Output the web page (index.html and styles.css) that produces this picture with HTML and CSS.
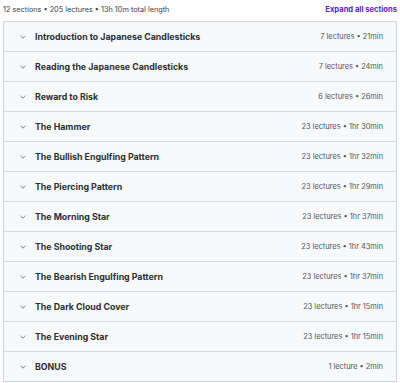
FILE: index.html
```html
<!DOCTYPE html>
<html>
<head>
	<meta charset="utf-8">
	<title>Course content</title>
	<link rel="stylesheet" href="styles.css">
</head>
<body>
	<div class="summary">
		<span class="totals">12 sections • 205 lectures • 13h 10m total length</span>
		<span class="expand">Expand all sections</span>
	</div>
	<ul class="sections">
		<li><svg class="chev" viewBox="0 0 6 4"><path d="M0.5 0.8 L3 3.2 L5.5 0.8"/></svg><span class="title">Introduction to Japanese Candlesticks</span><span class="meta">7 lectures • 21min</span></li>
		<li><svg class="chev" viewBox="0 0 6 4"><path d="M0.5 0.8 L3 3.2 L5.5 0.8"/></svg><span class="title">Reading the Japanese Candlesticks</span><span class="meta">7 lectures • 24min</span></li>
		<li><svg class="chev" viewBox="0 0 6 4"><path d="M0.5 0.8 L3 3.2 L5.5 0.8"/></svg><span class="title">Reward to Risk</span><span class="meta">6 lectures • 26min</span></li>
		<li><svg class="chev" viewBox="0 0 6 4"><path d="M0.5 0.8 L3 3.2 L5.5 0.8"/></svg><span class="title">The Hammer</span><span class="meta">23 lectures • 1hr 30min</span></li>
		<li><svg class="chev" viewBox="0 0 6 4"><path d="M0.5 0.8 L3 3.2 L5.5 0.8"/></svg><span class="title">The Bullish Engulfing Pattern</span><span class="meta">23 lectures • 1hr 32min</span></li>
		<li><svg class="chev" viewBox="0 0 6 4"><path d="M0.5 0.8 L3 3.2 L5.5 0.8"/></svg><span class="title">The Piercing Pattern</span><span class="meta">23 lectures • 1hr 29min</span></li>
		<li><svg class="chev" viewBox="0 0 6 4"><path d="M0.5 0.8 L3 3.2 L5.5 0.8"/></svg><span class="title">The Morning Star</span><span class="meta">23 lectures • 1hr 37min</span></li>
		<li><svg class="chev" viewBox="0 0 6 4"><path d="M0.5 0.8 L3 3.2 L5.5 0.8"/></svg><span class="title">The Shooting Star</span><span class="meta">23 lectures • 1hr 43min</span></li>
		<li><svg class="chev" viewBox="0 0 6 4"><path d="M0.5 0.8 L3 3.2 L5.5 0.8"/></svg><span class="title">The Bearish Engulfing Pattern</span><span class="meta">23 lectures • 1hr 37min</span></li>
		<li><svg class="chev" viewBox="0 0 6 4"><path d="M0.5 0.8 L3 3.2 L5.5 0.8"/></svg><span class="title">The Dark Cloud Cover</span><span class="meta">23 lectures • 1hr 15min</span></li>
		<li><svg class="chev" viewBox="0 0 6 4"><path d="M0.5 0.8 L3 3.2 L5.5 0.8"/></svg><span class="title">The Evening Star</span><span class="meta">23 lectures • 1hr 15min</span></li>
		<li><svg class="chev" viewBox="0 0 6 4"><path d="M0.5 0.8 L3 3.2 L5.5 0.8"/></svg><span class="title">BONUS</span><span class="meta">1 lecture • 2min</span></li>
	</ul>
</body>
</html>
```
FILE: styles.css
```css
body {
	margin: 0; padding: 0 3px; font-family: 'Inter', sans-serif; color: #2d2f31; background: #fff;
}
.summary {
	display: flex; justify-content: space-between; align-items: flex-start; box-sizing: border-box; height: 21px; padding-top: 5px;
}
.totals { font-size: 7.3px; color: #3e4143; }
.expand { font-size: 7.6px; font-weight: 700; color: #5624d0; }
.sections {
	list-style: none; margin: 0; padding: 0; border: 1px solid #d1d7dc;
}
.sections li {
	display: flex; align-items: center; height: 29px; padding: 0 13px 0 16px; background: #f7f9fa; border-bottom: 1px solid #d1d7dc;
}
.sections li:last-child { border-bottom: none; }
.chev { width: 6px; height: 4px; margin: 0 9px 0 0; fill: none; stroke: #6a6f73; stroke-width: 0.9; }
.title { flex: 1; font-size: 8.8px; font-weight: 700; color: #2d2f31; }
.meta { font-size: 7.4px; color: #52575b; }
```
